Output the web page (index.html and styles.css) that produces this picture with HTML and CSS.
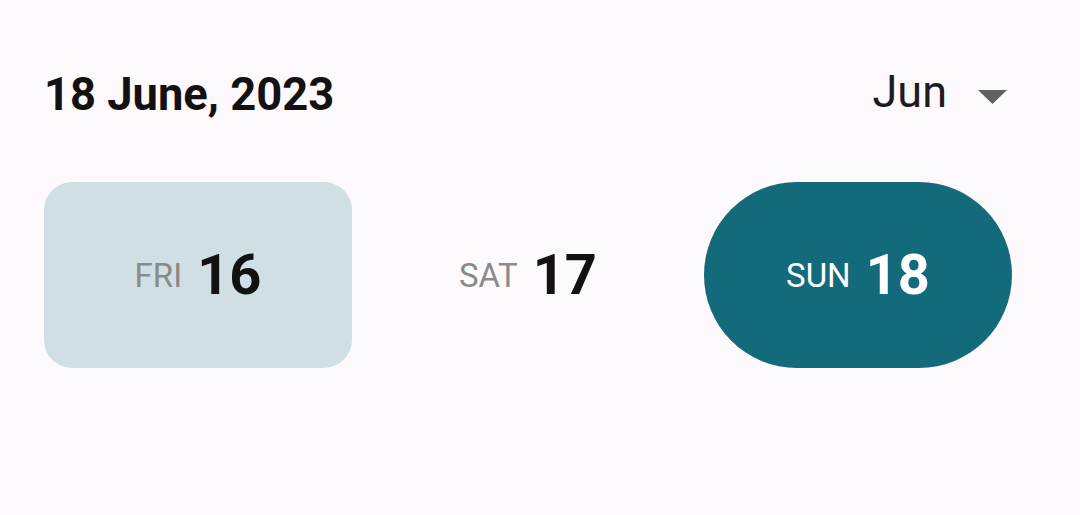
FILE: index.html
```html
<!DOCTYPE html>
<html>
<head>
<meta charset="utf-8">
<link rel="stylesheet" href="styles.css">
</head>
<body>
<div class="page">
  <header class="header">
    <h1 class="title">18 June, 2023</h1>
    <div class="month">
      <span class="month-label">Jun</span>
      <svg class="caret" width="29" height="14" viewBox="0 0 29 14"><path d="M0 0 L29 0 L14.5 14 Z" fill="#616161"/></svg>
    </div>
  </header>
  <div class="days">
    <div class="day day-light"><span class="dow">FRI</span><span class="num">16</span></div>
    <div class="day"><span class="dow">SAT</span><span class="num">17</span></div>
    <div class="day day-selected"><span class="dow">SUN</span><span class="num">18</span></div>
  </div>
</div>
</body>
</html>
```

FILE: styles.css
```css
html, body {
  margin: 0;
  padding: 0;
  background: #fdf9fc;
  font-family: Roboto, "Liberation Sans", sans-serif;
}
.page {
  padding: 67px 68px 0 44px;
}
.header {
  display: flex;
  justify-content: space-between;
  align-items: center;
  height: 56px;
}
.title {
  margin: 0;
  font-size: 45.3px;
  line-height: 56px;
  font-weight: 700;
  color: #121212;
}
.month {
  display: flex;
  align-items: center;
  gap: 31px;
  margin-right: 5px;
}
.month-label {
  font-size: 45px;
  line-height: 52px;
  margin-bottom: 6px;
  color: #1d1b20;
}
.caret {
  display: block;
  margin-top: 4px;
}
.days {
  display: flex;
  gap: 22px;
  margin-top: 59px;
  width: 968px;
}
.day {
  width: 308px;
  height: 186px;
  display: flex;
  align-items: center;
  justify-content: center;
  gap: 15px;
  border-radius: 28px;
}
.day-light {
  background: #cfdfe4;
}
.day-selected {
  background: #136a7a;
  border-radius: 93px;
}
.dow {
  font-size: 33px;
  color: #8a8a8a;
}
.num {
  font-size: 56px;
  font-weight: 700;
  color: #121212;
}
.day-selected .dow,
.day-selected .num {
  color: #ffffff;
}
```
